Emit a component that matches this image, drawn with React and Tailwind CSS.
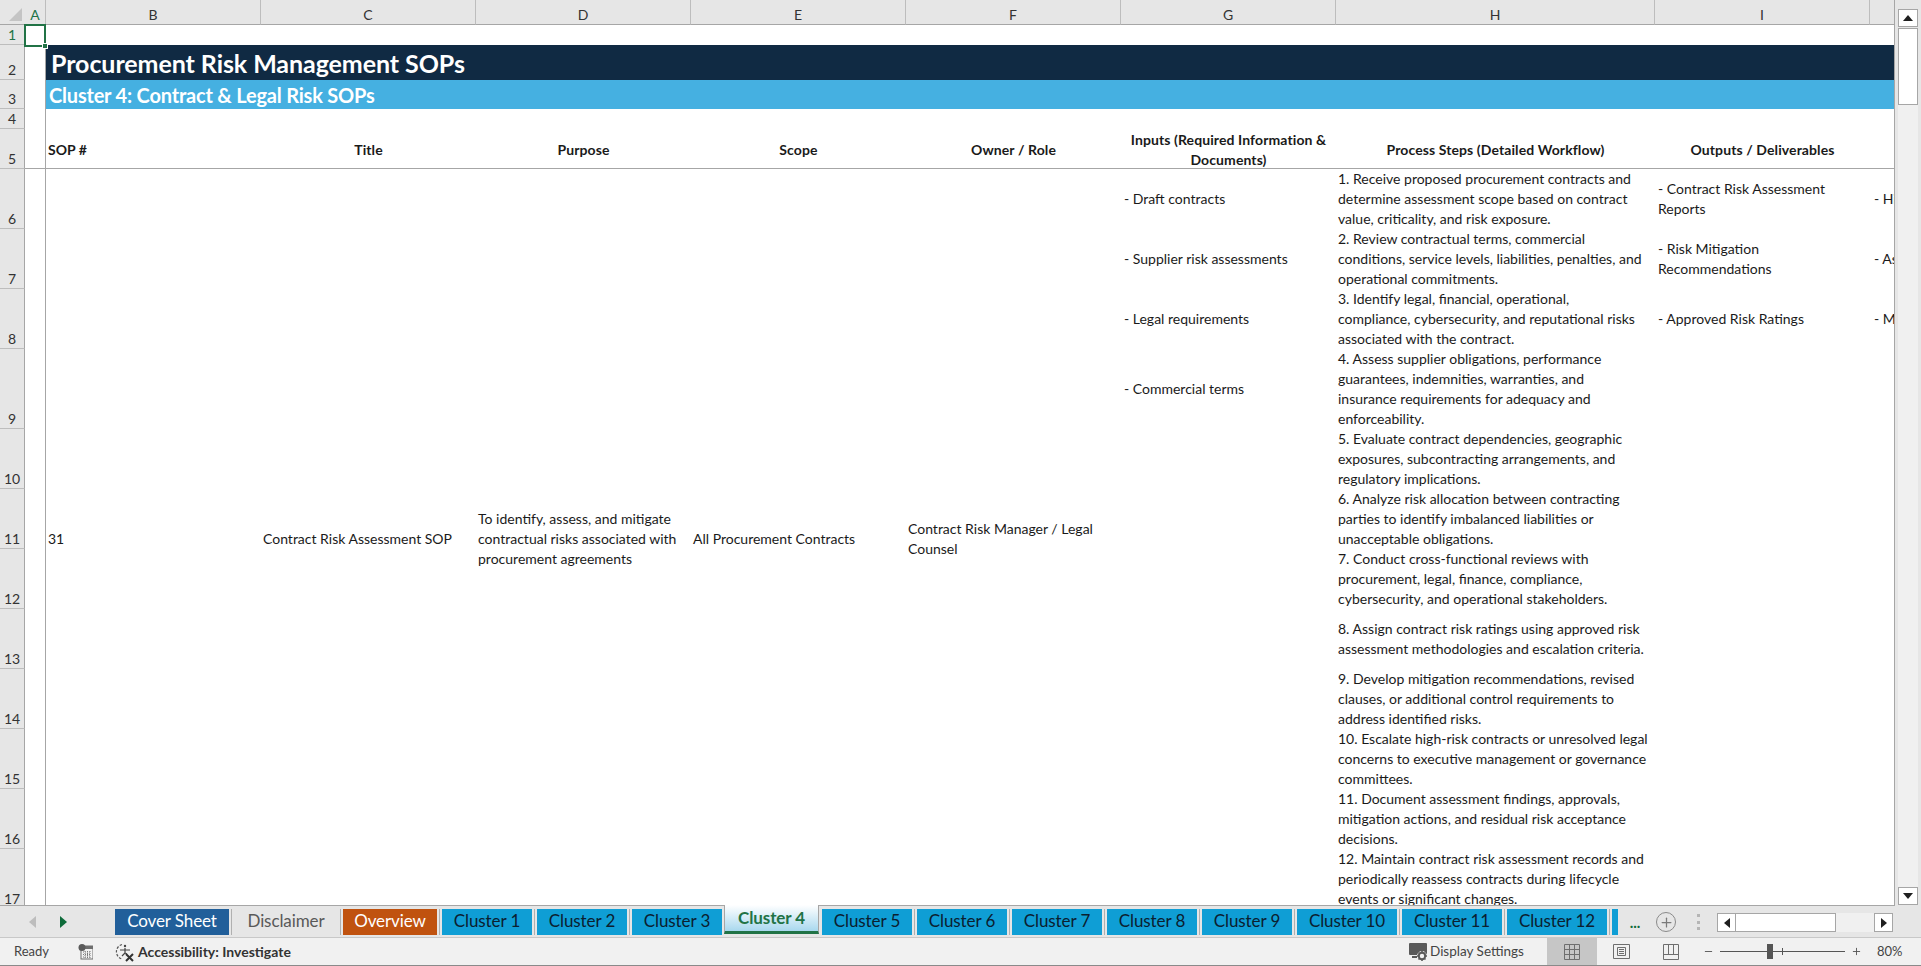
import { Plus, Minus } from 'lucide-react';

const columns = [
  { label: 'A', cls: 'col-start-2 bg-[#d2d2d2] text-[#217346]' },
  { label: 'B', cls: 'col-start-3' },
  { label: 'C', cls: 'col-start-4' },
  { label: 'D', cls: 'col-start-5' },
  { label: 'E', cls: 'col-start-6' },
  { label: 'F', cls: 'col-start-7' },
  { label: 'G', cls: 'col-start-8' },
  { label: 'H', cls: 'col-start-9' },
  { label: 'I', cls: 'col-start-10' },
];

const rowHeaders = [
  { label: '1', cls: 'row-start-2 bg-[#d2d2d2] text-[#217346]' },
  { label: '2', cls: 'row-start-3' },
  { label: '3', cls: 'row-start-4' },
  { label: '4', cls: 'row-start-5' },
  { label: '5', cls: 'row-start-6' },
  { label: '6', cls: 'row-start-7' },
  { label: '7', cls: 'row-start-8' },
  { label: '8', cls: 'row-start-9' },
  { label: '9', cls: 'row-start-10' },
  { label: '10', cls: 'row-start-11' },
  { label: '11', cls: 'row-start-12' },
  { label: '12', cls: 'row-start-13' },
  { label: '13', cls: 'row-start-14' },
  { label: '14', cls: 'row-start-15' },
  { label: '15', cls: 'row-start-16' },
  { label: '16', cls: 'row-start-17' },
  { label: '17', cls: 'row-start-18' },
];

const headers = [
  { text: ['Title'], cls: 'col-start-4' },
  { text: ['Purpose'], cls: 'col-start-5' },
  { text: ['Scope'], cls: 'col-start-6' },
  { text: ['Owner / Role'], cls: 'col-start-7' },
  { text: ['Inputs (Required Information &', 'Documents)'], cls: 'col-start-8' },
  { text: ['Process Steps (Detailed Workflow)'], cls: 'col-start-9' },
  { text: ['Outputs / Deliverables'], cls: 'col-start-10' },
];

const merged = [
  { text: ['31'], cls: 'col-start-3' },
  { text: ['Contract Risk Assessment SOP'], cls: 'col-start-4' },
  { text: ['To identify, assess, and mitigate', 'contractual risks associated with', 'procurement agreements'], cls: 'col-start-5' },
  { text: ['All Procurement Contracts'], cls: 'col-start-6' },
  { text: ['Contract Risk Manager / Legal', 'Counsel'], cls: 'col-start-7' },
];

const inputs = [
  { text: '- Draft contracts', cls: 'row-start-7' },
  { text: '- Supplier risk assessments', cls: 'row-start-8' },
  { text: '- Legal requirements', cls: 'row-start-9' },
  { text: '- Commercial terms', cls: 'row-start-10' },
];

const steps = [
  { lines: ['1. Receive proposed procurement contracts and', 'determine assessment scope based on contract', 'value, criticality, and risk exposure.'], cls: 'row-start-7' },
  { lines: ['2. Review contractual terms, commercial', 'conditions, service levels, liabilities, penalties, and', 'operational commitments.'], cls: 'row-start-8' },
  { lines: ['3. Identify legal, financial, operational,', 'compliance, cybersecurity, and reputational risks', 'associated with the contract.'], cls: 'row-start-9' },
  { lines: ['4. Assess supplier obligations, performance', 'guarantees, indemnities, warranties, and', 'insurance requirements for adequacy and', 'enforceability.'], cls: 'row-start-10' },
  { lines: ['5. Evaluate contract dependencies, geographic', 'exposures, subcontracting arrangements, and', 'regulatory implications.'], cls: 'row-start-11' },
  { lines: ['6. Analyze risk allocation between contracting', 'parties to identify imbalanced liabilities or', 'unacceptable obligations.'], cls: 'row-start-12' },
  { lines: ['7. Conduct cross-functional reviews with', 'procurement, legal, finance, compliance,', 'cybersecurity, and operational stakeholders.'], cls: 'row-start-13' },
  { lines: ['8. Assign contract risk ratings using approved risk', 'assessment methodologies and escalation criteria.'], cls: 'row-start-14' },
  { lines: ['9. Develop mitigation recommendations, revised', 'clauses, or additional control requirements to', 'address identified risks.'], cls: 'row-start-15' },
  { lines: ['10. Escalate high-risk contracts or unresolved legal', 'concerns to executive management or governance', 'committees.'], cls: 'row-start-16' },
  { lines: ['11. Document assessment findings, approvals,', 'mitigation actions, and residual risk acceptance', 'decisions.'], cls: 'row-start-17' },
  { lines: ['12. Maintain contract risk assessment records and', 'periodically reassess contracts during lifecycle', 'events or significant changes.'], cls: 'row-start-18' },
];

const outputs = [
  { lines: ['- Contract Risk Assessment', 'Reports'], cls: 'row-start-7' },
  { lines: ['- Risk Mitigation', 'Recommendations'], cls: 'row-start-8' },
  { lines: ['- Approved Risk Ratings'], cls: 'row-start-9' },
];

const nextCol = [
  { text: '- High-risk', cls: 'row-start-7' },
  { text: '- Assigned', cls: 'row-start-8' },
  { text: '- Mitigation', cls: 'row-start-9' },
];

const cluster = 'bg-[#0f9ed5] text-[#0b2030]';

const tabs = [
  { label: 'Cover Sheet', cls: 'w-[114px] ml-[3px] bg-[#215f9a] text-white' },
  { label: 'Disclaimer', cls: 'w-[104px] text-[#595959]' },
  { label: 'Overview', cls: 'w-[94px] bg-[#c0520f] text-white' },
  { label: 'Cluster 1', cls: `w-[90px] ${cluster}` },
  { label: 'Cluster 2', cls: `w-[90px] ${cluster}` },
  { label: 'Cluster 3', cls: `w-[90px] ${cluster}`, noSep: true },
  { label: 'Cluster 4', active: true },
  { label: 'Cluster 5', cls: `w-[90px] ${cluster}` },
  { label: 'Cluster 6', cls: `w-[90px] ${cluster}` },
  { label: 'Cluster 7', cls: `w-[90px] ${cluster}` },
  { label: 'Cluster 8', cls: `w-[90px] ${cluster}` },
  { label: 'Cluster 9', cls: `w-[90px] ${cluster}` },
  { label: 'Cluster 10', cls: `w-[100px] ${cluster}` },
  { label: 'Cluster 11', cls: `w-[100px] ${cluster}` },
  { label: 'Cluster 12', cls: `w-[100px] ${cluster}` },
];

const Lines = ({ lines }) => lines.map((line) => <div key={line} className="whitespace-nowrap">{line}</div>);

const Sheet = () => (
  <div className="w-[1895px] h-[906px] overflow-hidden grid grid-cols-[25px_21px_215px_215px_215px_215px_215px_215px_319px_215px_25px] grid-rows-[25px_20px_35px_29px_20px_40px_60px_60px_60px_80px_60px_60px_60px_60px_60px_60px_60px_60px] bg-white border-r border-b border-[#a6a6a6] text-[14px] leading-[20px] text-[#1a1a1a]">
    {/* corner + column headers */}
    <div className="col-start-1 row-start-1 bg-[#e6e6e6] border-b border-[#a6a6a6] flex items-end justify-end pr-[3px] pb-[3px]">
      <svg width="13" height="13" viewBox="0 0 13 13"><polygon points="13,0 13,13 0,13" fill="#c4c4c4" /></svg>
    </div>
    {columns.map((col) => (
      <div key={col.label} className={`row-start-1 bg-[#e6e6e6] border-b border-[#a6a6a6] border-r border-r-[#bdbdbd] flex items-center justify-center pt-[6px] text-[#333] text-[14px] ${col.cls}`}>
        {col.label}
      </div>
    ))}
    <div className="col-start-11 row-start-1 bg-[#e6e6e6] border-b border-[#a6a6a6]" />

    {/* row headers */}
    {rowHeaders.map((row) => (
      <div key={row.label} className={`col-start-1 bg-[#e6e6e6] border-r border-[#a6a6a6] border-b border-b-[#bdbdbd] flex items-end justify-center text-[#333] text-[14px] leading-[18px] ${row.cls}`}>
        {row.label}
      </div>
    ))}

    {/* column A edge and selected cell */}
    <div className="col-start-2 row-start-2 row-end-19 border-r border-[#a6a6a6]" />
    <div className="col-start-2 row-start-2 relative border-2 border-[#217346] -mt-px -mb-[2px] -ml-px z-10">
      <div className="absolute -right-[4px] -bottom-[4px] w-[6px] h-[6px] bg-[#217346] border border-white" />
    </div>

    {/* title bands */}
    <div className="col-start-3 col-end-12 row-start-3 bg-[#102a43] text-white text-[25px] font-bold flex items-center pl-[5px] tracking-[-0.07px]">
      Procurement Risk Management SOPs
    </div>
    <div className="col-start-3 col-end-12 row-start-4 bg-[#45b0e1] text-white text-[20px] font-bold flex items-center pl-[3px] tracking-[-0.2px]">
      Cluster 4: Contract &amp; Legal Risk SOPs
    </div>

    {/* table header */}
    <div className="col-start-2 col-end-12 row-start-6 border-b border-[#a6a6a6]" />
    <div className="col-start-3 row-start-6 font-bold flex items-center px-[2px] pt-[1px]">SOP #</div>
    {headers.map((h) => (
      <div key={h.text[0]} className={`row-start-6 font-bold text-center flex flex-col items-center justify-center pt-[1px] tracking-[0.1px] ${h.cls}`}>
        <Lines lines={h.text} />
      </div>
    ))}

    {/* merged cells */}
    {merged.map((cell) => (
      <div key={cell.text[0]} className={`row-start-7 row-end-19 flex flex-col justify-center px-[2px] ${cell.cls}`}>
        <Lines lines={cell.text} />
      </div>
    ))}

    {inputs.map((item) => (
      <div key={item.text} className={`col-start-8 flex items-center px-[3px] whitespace-nowrap ${item.cls}`}>{item.text}</div>
    ))}
    {steps.map((step) => (
      <div key={step.lines[0]} className={`col-start-9 flex flex-col justify-center px-[2px] ${step.cls}`}>
        <Lines lines={step.lines} />
      </div>
    ))}
    {outputs.map((item) => (
      <div key={item.lines[0]} className={`col-start-10 flex flex-col justify-center px-[3px] ${item.cls}`}>
        <Lines lines={item.lines} />
      </div>
    ))}
    {nextCol.map((item) => (
      <div key={item.text} className={`col-start-11 flex items-center pl-[4px] overflow-hidden whitespace-nowrap ${item.cls}`}>{item.text}</div>
    ))}
  </div>
);

const VScroll = () => (
  <div className="w-[26px] h-[906px] bg-[#e6e6e6] flex flex-col items-center pt-[9px] pb-[1px]">
    <div className="w-[20px] h-[18px] bg-white border border-[#a6a6a6] flex items-center justify-center">
      <svg width="10" height="6" viewBox="0 0 10 6"><polygon points="5,0 10,6 0,6" fill="#1f1f1f" /></svg>
    </div>
    <div className="w-[20px] h-[77px] bg-white border border-[#a6a6a6] mt-px" />
    <div className="w-[20px] flex-1 bg-[#f0f0f0]" />
    <div className="w-[20px] h-[18px] bg-white border border-[#a6a6a6] flex items-center justify-center">
      <svg width="10" height="6" viewBox="0 0 10 6"><polygon points="0,0 10,0 5,6" fill="#1f1f1f" /></svg>
    </div>
  </div>
);

const TabStrip = () => (
  <div className="h-[32px] bg-[#e6e6e6] flex items-start text-[17px] tracking-[-0.1px] border-b border-[#c8c8c8]">
    <div className="w-[112px] h-full flex items-center shrink-0">
      <svg className="ml-[29px]" width="7" height="12" viewBox="0 0 7 12"><polygon points="7,0 7,12 0,6" fill="#bdbdbd" /></svg>
      <svg className="ml-[24px]" width="7" height="12" viewBox="0 0 7 12"><polygon points="0,0 7,6 0,12" fill="#0e6b3a" /></svg>
    </div>
    {tabs.map((tab) =>
      tab.active ? (
        <div key={tab.label} className="w-[95px] h-[29px] -mt-px ml-[2px] mr-[3px] shrink-0 border-x border-[#a6a6a6] border-b-[3px] border-b-[#217346] bg-gradient-to-b from-white to-[#a8d8ee] flex items-center justify-center font-bold text-[#217346] text-[17px]">
          {tab.label}
        </div>
      ) : (
        <div key={tab.label} className="flex items-start shrink-0">
          <div className={`h-[26px] mt-[3px] pb-[3px] flex items-center justify-center ${tab.cls}`}>{tab.label}</div>
          {!tab.noSep && <div className="w-[1px] h-[26px] mt-[3px] bg-[#b0b0b0] mx-[2px]" />}
        </div>
      ),
    )}
    <div className="w-[6px] h-[26px] mt-[3px] bg-[#0f9ed5] shrink-0" />
    <div className="w-[32px] text-center text-[#0e6b3a] shrink-0 mt-[3px] font-bold leading-[26px] text-[15px] ml-[1px]">...</div>
    <div className="w-[20px] h-[20px] mt-[6px] ml-[5px] rounded-full border border-[#8a8a8a] flex items-center justify-center shrink-0">
      <Plus size={15} color="#7a7a7a" strokeWidth={2} />
    </div>
    <div className="w-[3px] h-[16px] mt-[8px] ml-[21px] shrink-0 flex flex-col justify-between">
      <span className="h-[3px] bg-[#b5b5b5]" />
      <span className="h-[3px] bg-[#b5b5b5]" />
      <span className="h-[3px] bg-[#b5b5b5]" />
    </div>
    <div className="ml-[17px] mt-[7px] h-[19px] w-[176px] flex shrink-0 bg-[#f0f0f0]">
      <div className="w-[19px] border border-[#a6a6a6] bg-white flex items-center justify-center">
        <svg width="6" height="10" viewBox="0 0 6 10"><polygon points="6,0 6,10 0,5" fill="#1f1f1f" /></svg>
      </div>
      <div className="w-[100px] bg-white border-y border-r border-[#a6a6a6]" />
      <div className="flex-1" />
      <div className="w-[19px] border border-[#a6a6a6] bg-white flex items-center justify-center">
        <svg width="6" height="10" viewBox="0 0 6 10"><polygon points="0,0 6,5 0,10" fill="#1f1f1f" /></svg>
      </div>
    </div>
  </div>
);

const MacroIcon = () => (
  <svg width="15" height="16" viewBox="0 0 15 16">
    <rect x="3" y="2" width="12" height="13" fill="none" stroke="#6e6e6e" />
    <rect x="3" y="2" width="12" height="3" fill="#6e6e6e" />
    <circle cx="4" cy="3.5" r="3.5" fill="#5a5a5a" />
    <path d="M5 8h8M5 10.5h8M5 13h8M7 7v7M9.5 7v7M12 7v7" stroke="#7a7a7a" strokeDasharray="1 1" fill="none" />
  </svg>
);

const AccessibilityIcon = () => (
  <svg width="20" height="20" viewBox="0 0 20 20" fill="none">
    <path d="M7 2.5A7.5 7.5 0 0 0 7 17" stroke="#5a5a5a" strokeDasharray="2.5 1.5" strokeWidth="1.2" />
    <circle cx="10" cy="4" r="1.2" fill="#444" />
    <path d="M5 8h10M10 6v5l-3 3M10 11l2 1" stroke="#444" strokeWidth="1.2" />
    <path d="M11 12l7 7M18 12l-7 7" stroke="#333" strokeWidth="2" />
  </svg>
);

const DisplayIcon = () => (
  <svg width="20" height="20" viewBox="0 0 20 20">
    <rect x="0" y="1" width="18" height="12" rx="1" fill="#5a5a5a" />
    <rect x="3" y="14" width="5" height="2" fill="#5a5a5a" />
    <circle cx="13" cy="14" r="5" fill="#f1f1f1" />
    <circle cx="13" cy="14" r="3.2" fill="none" stroke="#5a5a5a" strokeWidth="2" />
    <path d="M13 9v2M13 17v2M8 14h2M16 14h2M9.5 10.5l1.4 1.4M15.1 16.1l1.4 1.4M16.5 10.5l-1.4 1.4M10.9 16.1l-1.4 1.4" stroke="#5a5a5a" strokeWidth="1.6" />
  </svg>
);

const StatusBar = () => (
  <div className="h-[28px] bg-[#f1f1f1] flex items-center text-[13px] text-[#444] border-b border-[#8a8a8a]">
    <span className="ml-[14px] w-[64px]">Ready</span>
    <MacroIcon />
    <span className="ml-[22px]"><AccessibilityIcon /></span>
    <span className="ml-[3px] font-bold text-[14px] text-[#333]">Accessibility: Investigate</span>

    <div className="ml-auto flex items-center h-full">
      <DisplayIcon />
      <span className="ml-[1px] w-[117px] whitespace-nowrap text-[13.5px]">Display Settings</span>
      <div className="w-[50px] h-full bg-[#c6c6c6] flex items-center justify-center">
        <svg width="16" height="16" viewBox="0 0 16 16" fill="none" stroke="#6e6e6e"><path d="M.5.5h15v15H.5zM5.5.5v15M10.5.5v15M.5 5.5h15M.5 10.5h15" /></svg>
      </div>
      <div className="w-[49px] flex justify-center">
        <svg width="17" height="15" viewBox="0 0 17 15" fill="none" stroke="#6e6e6e"><path d="M.5.5h16v14H.5zM4.5 3.5h8v8h-8zM6 5.5h5M6 7.5h5M6 9.5h5" /></svg>
      </div>
      <div className="w-[50px] flex justify-center">
        <svg width="16" height="16" viewBox="0 0 16 16" fill="none" stroke="#6e6e6e"><path d="M.5.5h15v15H.5zM.5 10.5h15M5.5.5v10M10.5.5v10" /></svg>
      </div>
      <div className="ml-[7px] flex items-center">
        <Minus size={11} color="#555" />
        <div className="w-[125px] h-px bg-[#555] mx-[6px] relative">
          <span className="absolute left-[47px] -top-[7px] w-[6px] h-[15px] bg-[#555]" />
          <span className="absolute left-[62px] -top-[3px] w-px h-[7px] bg-[#555]" />
        </div>
        <Plus size={11} color="#555" />
      </div>
      <span className="ml-[15px] w-[44px]">80%</span>
    </div>
  </div>
);

const App = () => {
  return (
    <div className="w-[1921px] h-[966px] overflow-hidden font-['Lato',sans-serif] bg-white">
      <div className="flex h-[906px]">
        <Sheet />
        <VScroll />
      </div>
      <TabStrip />
      <StatusBar />
    </div>
  );
};

export default App;
